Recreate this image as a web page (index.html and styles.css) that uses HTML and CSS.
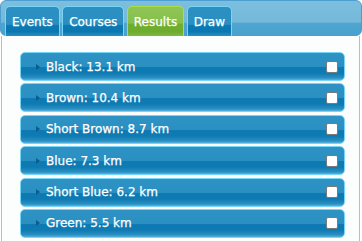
FILE: index.html
```html
<!DOCTYPE html>
<html lang="en">
<head>
    <meta charset="UTF-8">
    <title>Results</title>
    <link rel="stylesheet" href="styles.css">
</head>
<body>
    <div class="tabs">
        <ul class="tab-nav">
            <li class="tab">Events</li>
            <li class="tab">Courses</li>
            <li class="tab active">Results</li>
            <li class="tab">Draw</li>
        </ul>

        <!-- Results panel -->
        <div class="panel">
            <div class="course"><span class="arrow"></span><span class="label">Black: 13.1 km</span><input type="checkbox" class="check"></div>
            <div class="course"><span class="arrow"></span><span class="label">Brown: 10.4 km</span><input type="checkbox" class="check"></div>
            <div class="course"><span class="arrow"></span><span class="label">Short Brown: 8.7 km</span><input type="checkbox" class="check"></div>
            <div class="course"><span class="arrow"></span><span class="label">Blue: 7.3 km</span><input type="checkbox" class="check"></div>
            <div class="course"><span class="arrow"></span><span class="label">Short Blue: 6.2 km</span><input type="checkbox" class="check"></div>
            <div class="course"><span class="arrow"></span><span class="label">Green: 5.5 km</span><input type="checkbox" class="check"></div>
        </div>
    </div>
</body>
</html>
```

FILE: styles.css
```css
* {
    margin: 0;
    padding: 0;
    box-sizing: border-box;
}

body {
    font-family: "DejaVu Sans", Verdana, sans-serif;
    font-size: 12px;
    background: #ffffff;
    overflow: hidden;
}

.tabs {
    width: 362px;
}

/* Tab header bar */
.tab-nav {
    list-style: none;
    display: flex;
    align-items: flex-end;
    width: 362px;
    height: 36px;
    padding: 5px 0 0 4px;
    border: 1px solid #4d9fd1;
    border-radius: 6px;
    background: linear-gradient(#7cbedd 0%, #74b9da 62%, #4ea6d0 66%, #47a1cc 100%);
}

.tab {
    height: 30px;
    margin-right: 2.5px;
    margin-bottom: -1px;
    padding: 0 6px;
    display: flex;
    align-items: center;
    color: #ffffff;
    -webkit-text-stroke: 0.25px #ffffff;
    border: 1px solid #77d5f7;
    border-bottom: none;
    border-radius: 5px 5px 0 0;
    background: linear-gradient(#2c91c2 0%, #2a8ec0 60%, #0d7ab3 62%, #0b77b0 85%, #2a8fc1 100%);
}

.tab.active {
    border-color: #acdd4a;
    background: linear-gradient(#8fc556 0%, #86bf4b 55%, #70ae2f 60%, #6eac2c 85%, #80b844 100%);
}

/* Content panel */
.panel {
    width: 359px;
    height: 205px;
    margin-left: 1px;
    padding: 16px 14px 0 18px;
    background: #fcfdfd;
    border: 1px solid #77d5f7;
    border-top: none;
    border-bottom: none;
}

.course {
    height: 29px;
    margin-bottom: 2.4px;
    display: flex;
    align-items: center;
    padding: 0 6px 0 15px;
    color: #ffffff;
    border: 1px solid #77d5f7;
    border-radius: 5px;
    background: linear-gradient(#2e93c4 0%, #2a8fc1 50%, #0d79b2 54%, #0f7bb3 75%, #2a8fc1 92%, #56b2de 100%);
}

.arrow {
    width: 0;
    height: 0;
    margin-right: 6px;
    border-left: 4px solid #0b5d8c;
    border-top: 3px solid transparent;
    border-bottom: 3px solid transparent;
}

.label {
    flex: 1;
    -webkit-text-stroke: 0.25px #ffffff;
}

.check {
    appearance: none;
    -webkit-appearance: none;
    width: 12px;
    height: 12px;
    background: #ffffff;
    border: 1px solid #7a7a7a;
    border-radius: 2px;
}
```
